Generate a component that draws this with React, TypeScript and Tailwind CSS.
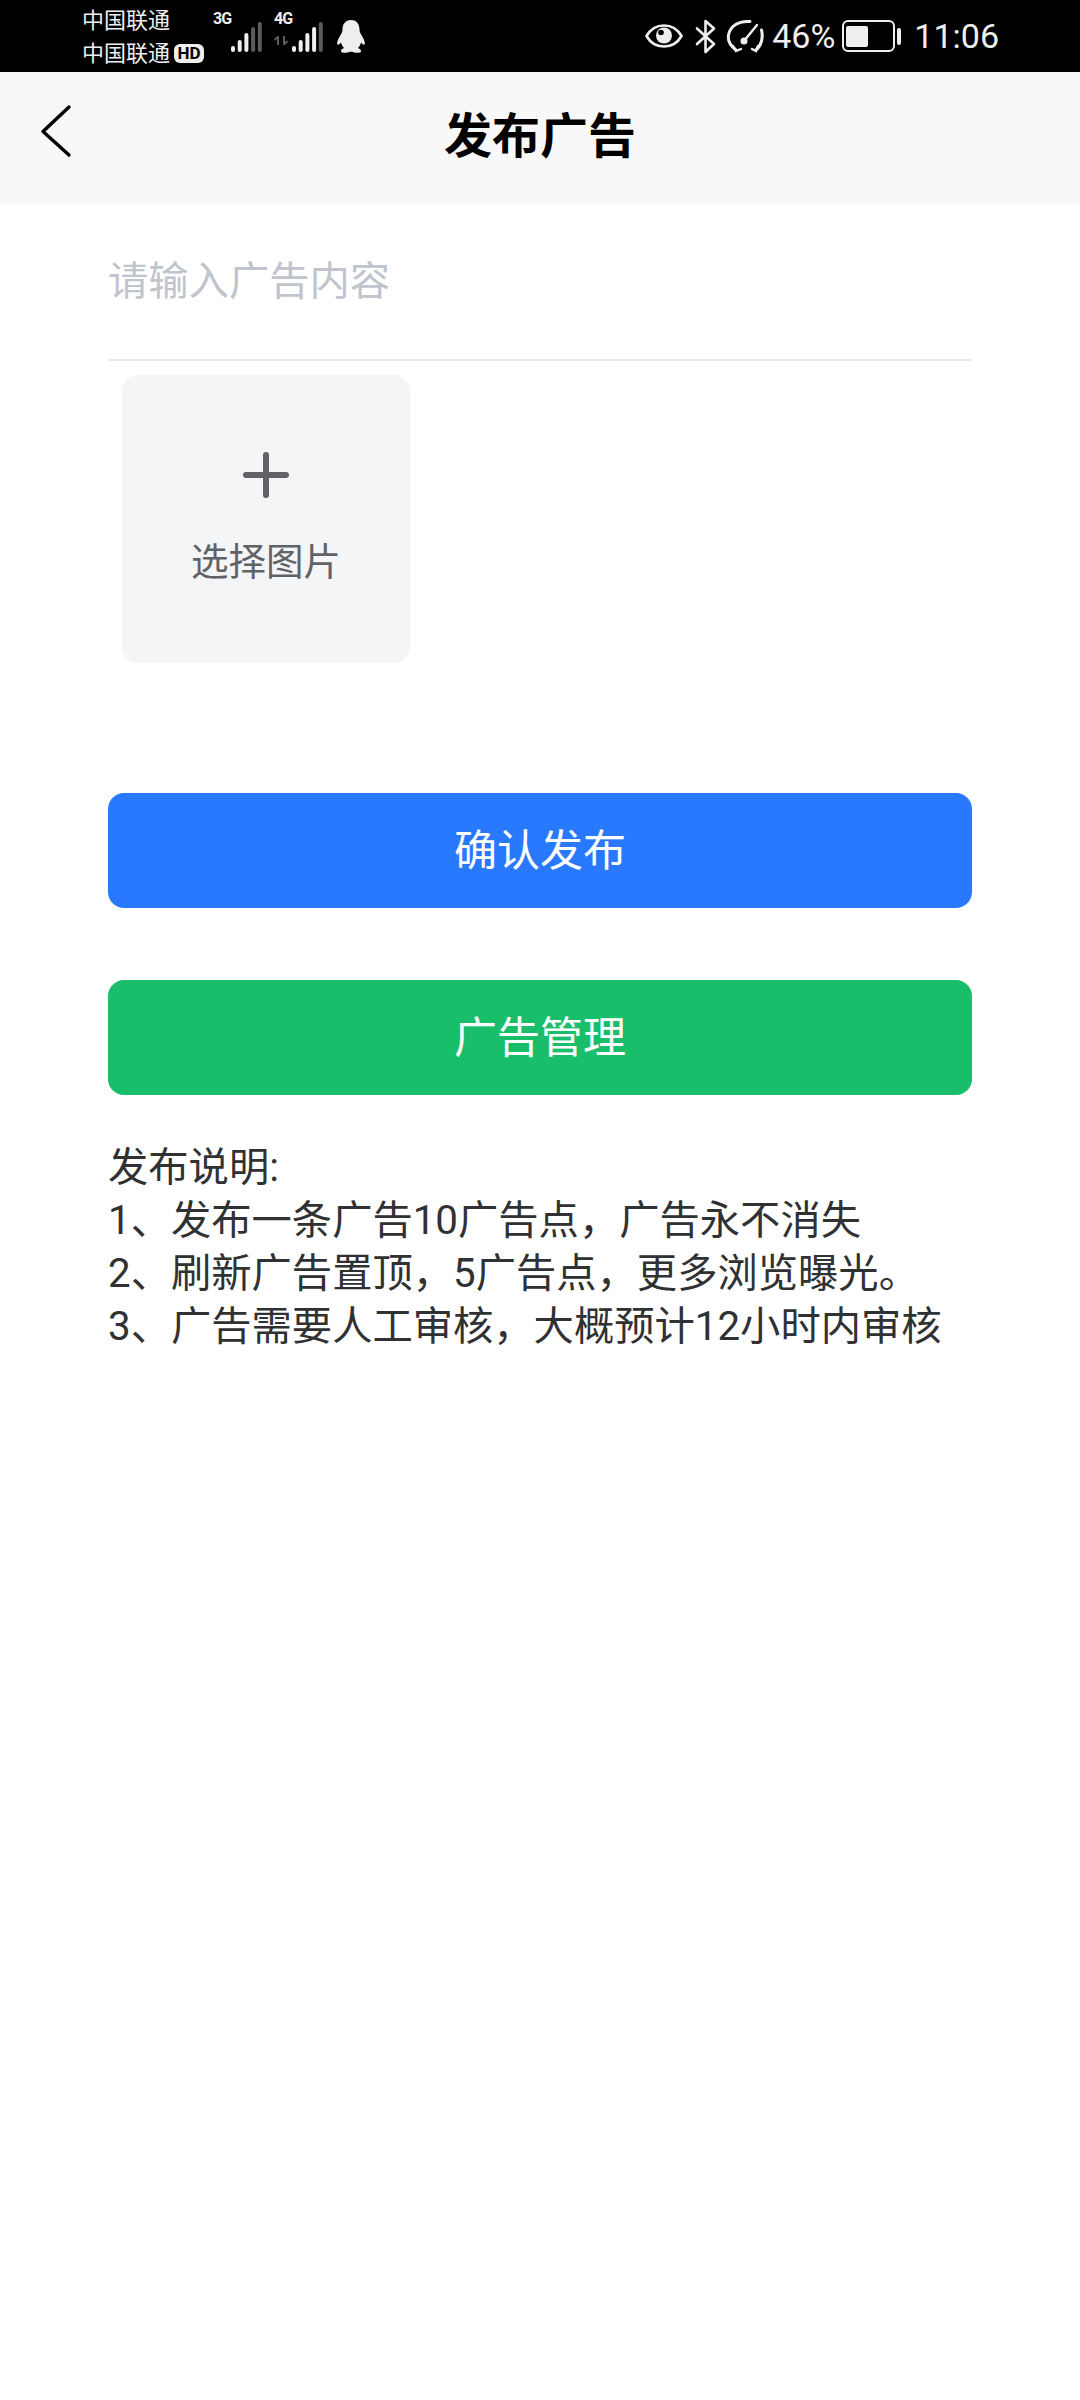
const FONT = "font-['Roboto','Noto_Sans_CJK_SC',sans-serif]";

function Signal({ lit }: { lit: number }) {
  const bars = [6, 12, 19, 25, 30];
  return (
    <svg width="33" height="32" viewBox="0 0 33 32" className="block">
      {bars.map((h, i) => (
        <rect
          key={i}
          x={i * 6.7}
          y={32 - h}
          width="4"
          height={h}
          rx="2"
          fill={i < lit ? "#f0f0f0" : "#5c5c5c"}
        />
      ))}
    </svg>
  );
}

function StatusBar() {
  return (
    <div className={`${FONT} flex h-[72px] items-center bg-black pl-[82px] pr-[81px] text-[#eeeeee]`}>
      {/* carriers */}
      <div className="mt-[2px] flex w-[122px] flex-col text-[22px] leading-[33px]">
        <span>中国联通</span>
        <div className="flex items-center">
          <span>中国联通</span>
          <span className="ml-[4px] flex h-[19px] w-[30px] items-center justify-center rounded-[6px] bg-[#eeeeee] text-[17px] font-bold leading-none text-black">
            HD
          </span>
        </div>
      </div>

      {/* 3G */}
      <div className="ml-[9px] flex items-start">
        <span className="mt-[-8px] w-[18px] text-[16px] font-bold leading-[14px] tracking-[-1px]">3G</span>
        <Signal lit={3} />
      </div>

      {/* 4G */}
      <div className="relative ml-[10px] flex items-start">
        <span className="mt-[-8px] w-[18px] text-[16px] font-bold leading-[14px] tracking-[-1px]">4G</span>
        <Signal lit={4} />
        <svg width="15" height="9" viewBox="0 0 15 9" className="absolute left-[0px] top-[16px]">
          <path d="M4 0v9M0.5 4L4 0.5M10 0v9M13.500 5L10 8.500" stroke="#5c5c5c" strokeWidth="2" fill="none" />
        </svg>
      </div>

      {/* qq */}
      <svg width="30" height="35" viewBox="0 0 30 35" className="ml-[11px] block">
        <path
          d="M15 1C9 1 6.500 5.500 6.500 10.500C6.500 13 5.500 14.500 4 17C2 20.500 0.500 24 1.500 25.500C2.300 26.300 4 25 5 23.500C5.500 25.500 6.500 27.500 8 29C6 30 4.500 31 5 32.500C5.500 34 9 34 11.500 33.500C13 33.200 14 32.800 15 32.800C16 32.800 17 33.200 18.500 33.500C21 34 24.500 34 25 32.500C25.500 31 24 30 22 29C23.500 27.500 24.500 25.500 25 23.500C26 25 27.700 26.300 28.500 25.500C29.500 24 28 20.500 26 17C24.500 14.500 23.500 13 23.500 10.500C23.500 5.500 21 1 15 1Z"
          fill="#eeeeee"
        />
      </svg>

      <div className="ml-auto flex items-center">
        {/* eye */}
        <svg width="38" height="24" viewBox="0 0 38 24" className="block">
          <path
            d="M1.500 12C5.500 5 11.500 1.500 19 1.500C26.500 1.500 32.500 5 36.500 12C32.500 19 26.500 22.500 19 22.500C11.500 22.500 5.500 19 1.500 12Z"
            fill="none"
            stroke="#eeeeee"
            strokeWidth="2.600"
          />
          <circle cx="19" cy="11.500" r="8" fill="#eeeeee" />
          <circle cx="16" cy="8.500" r="2.800" fill="#000000" />
        </svg>

        {/* bluetooth */}
        <svg width="22" height="35" viewBox="0 0 22 35" className="ml-[12px] block">
          <path
            d="M2 9.500L19 25L10.500 33V2L19 9.500L2 25"
            fill="none"
            stroke="#eeeeee"
            strokeWidth="2.600"
            strokeLinejoin="round"
            strokeLinecap="round"
          />
        </svg>

        {/* speed gauge */}
        <svg width="40" height="36" viewBox="0 0 40 36" className="ml-[9px] block">
          <path d="M10 32C4.500 28 1.500 23 2.500 17C4 8.500 12 2.500 24 3.500" fill="none" stroke="#eeeeee" strokeWidth="3" strokeLinecap="round" />
          <path d="M30 32C35 28 37.500 20 35.500 12" fill="none" stroke="#eeeeee" strokeWidth="3" strokeLinecap="round" />
          <path d="M7 28L10 33L15 31M26 31L30 33L32 28" fill="none" stroke="#eeeeee" strokeWidth="2.400" strokeLinecap="round" />
          <path d="M18 23L31 7" stroke="#eeeeee" strokeWidth="2.400" strokeLinecap="round" />
          <circle cx="18" cy="23" r="3.500" fill="#eeeeee" />
        </svg>

        <span className="ml-[6px] text-[34px] leading-none">46%</span>

        {/* battery */}
        <div className="ml-[7px] flex items-center">
          <div className="flex h-[32px] w-[53px] items-center rounded-[6px] border-[2.5px] border-[#eeeeee] pl-[2px]">
            <div className="h-[21px] w-[22px] rounded-[2px] bg-[#eeeeee]" />
          </div>
          <div className="ml-[2px] h-[17px] w-[4px] rounded-[2px] bg-[#eeeeee]" />
        </div>

        <span className="ml-[13px] text-[34px] leading-none">11:06</span>
      </div>
    </div>
  );
}

export default function App() {
  return (
    <div className={`${FONT} min-h-[2400px] w-[1080px] bg-white`}>
      <StatusBar />

      {/* nav bar */}
      <div className="grid h-[132px] grid-cols-[1fr_auto_1fr] items-center bg-[#f8f8f8]">
        <svg width="32" height="54" viewBox="0 0 32 54" className="mb-[14px] ml-[40px] block">
          <path d="M29 3L3 27.500L29 51" fill="none" stroke="#000000" strokeWidth="3.400" strokeLinecap="round" strokeLinejoin="round" />
        </svg>
        <h1 className="mb-[2px] text-[48px] font-bold leading-none text-black">发布广告</h1>
        <div />
      </div>

      <div className="px-[108px]">
        {/* content input */}
        <div className="h-[157px] border-b-2 border-[#e9ebef] pt-[54px] text-[40.3px] leading-[48px] text-[#c0c4cc]">
          请输入广告内容
        </div>

        {/* image picker */}
        <div className="ml-[14px] mt-[14px] flex h-[288px] w-[288px] flex-col items-center rounded-[16px] bg-[#f4f5f7]">
          <svg width="48" height="48" viewBox="0 0 48 48" className="mt-[76px] block">
            <path d="M24 4V44M4 24H44" stroke="#606266" strokeWidth="6" strokeLinecap="round" />
          </svg>
          <span className="mt-[41px] text-[37.5px] leading-[44px] text-[#606266]">选择图片</span>
        </div>

        {/* actions */}
        <button className="mt-[130px] flex h-[115px] w-full items-center justify-center rounded-[16px] bg-[#2979ff] pt-[2px] text-[43px] text-white">
          确认发布
        </button>
        <button className="mt-[72px] flex h-[115px] w-full items-center justify-center rounded-[16px] bg-[#19be6b] pt-[2px] text-[43px] text-white">
          广告管理
        </button>

        {/* notes */}
        <div className="mt-[46px] text-[40.3px] leading-[53px] text-[#303133]">
          <p>发布说明:</p>
          <p>1、发布一条广告10广告点，广告永不消失</p>
          <p>2、刷新广告置顶，5广告点，更多浏览曝光。</p>
          <p>3、广告需要人工审核，大概预计12小时内审核</p>
        </div>
      </div>
    </div>
  );
}
